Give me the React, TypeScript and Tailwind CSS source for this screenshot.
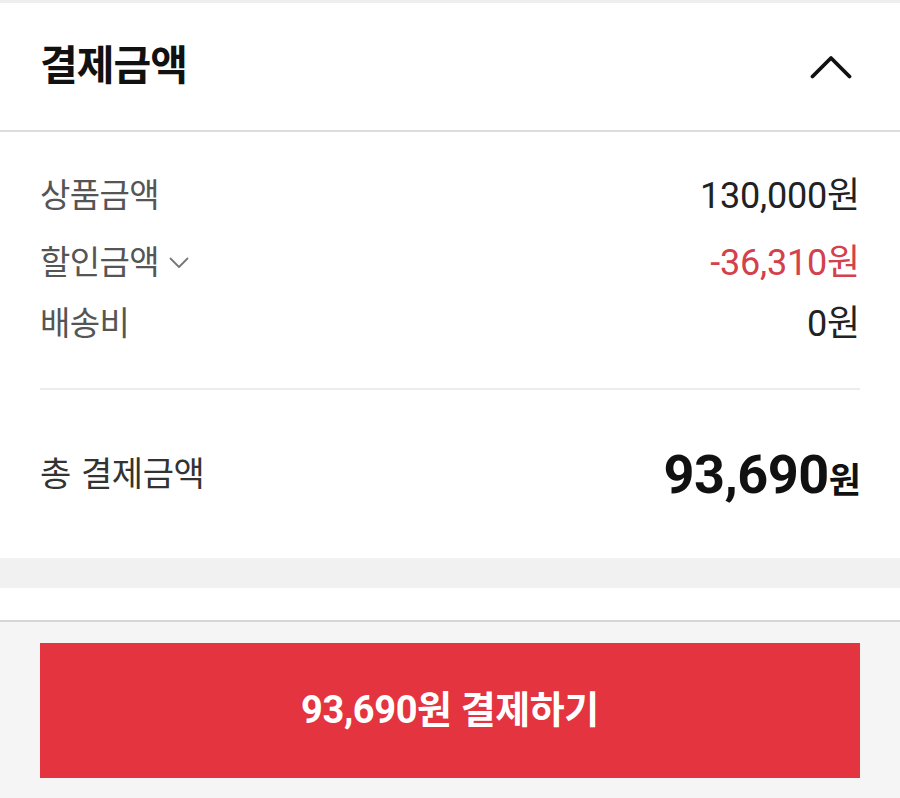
const label = "text-[33px] tracking-[-0.6px] text-[#555555]";
const value = "text-[36px] tracking-[-0.2px] text-[#222222]";

export default function App() {
  return (
    <div className="min-h-[798px] w-[900px] bg-[#f2f2f2] font-['Roboto','Noto_Sans_CJK_KR',sans-serif]">
      <div className="h-[3px] bg-[#eeeeee]" />

      <section className="bg-white">
        <div className="flex h-[129px] items-center justify-between border-b-2 border-[#dcdcdc] px-10">
          <h2 className="text-[41px] font-bold tracking-[-1px] text-[#111111]">결제금액</h2>
          <svg className="mr-[8px] h-[24px] w-[42px]" viewBox="0 0 42 24" fill="none">
            <path d="M2.5 21.5 21 3l18.5 18.5" stroke="#111111" strokeWidth={3.8} strokeLinecap="round" strokeLinejoin="round" />
          </svg>
        </div>

        <div className="px-10 pt-[43px]">
          <div className="flex h-[42px] items-center justify-between">
            <span className={label}>상품금액</span>
            <span className={value}>130,000원</span>
          </div>
          <div className="mt-[25px] flex h-[42px] items-center justify-between">
            <span className="flex items-center gap-[10px]">
              <span className={label}>할인금액</span>
              <svg className="h-[12px] w-[20px]" viewBox="0 0 20 12" fill="none">
                <path d="M1.5 1.5 10 10l8.5-8.5" stroke="#777777" strokeWidth={1.8} strokeLinecap="round" strokeLinejoin="round" />
              </svg>
            </span>
            <span className="text-[36px] tracking-[-0.2px] text-[#d2414c]">-36,310원</span>
          </div>
          <div className="mt-[19px] flex h-[42px] items-center justify-between">
            <span className={label}>배송비</span>
            <span className={value}>0원</span>
          </div>

          <div className="mt-[43px] h-[2px] bg-[#ececec]" />

          <div className="flex h-[168px] items-center justify-between">
            <span className="text-[34px] tracking-[-0.4px] text-[#333333]">
              총<span className="ml-[10px]">결제금액</span>
            </span>
            <span className="flex items-baseline text-[#111111]">
              <span className="text-[54px] font-bold tracking-[-0.5px]">93,690</span>
              <span className="text-[35px] font-bold tracking-[-1px]">원</span>
            </span>
          </div>
        </div>
      </section>

      <div className="h-[30px] bg-[#f1f1f1]" />
      <div className="h-[32px] bg-white" />

      <footer className="border-t-2 border-[#d6d6d6] bg-[#f5f5f5] px-10 pt-[21px] pb-[20px]">
        <button className="flex h-[135px] w-full items-center justify-center bg-[#e3343f] text-[38px] font-bold tracking-[-0.4px] text-white">
          93,690원 결제하기
        </button>
      </footer>
    </div>
  );
}
